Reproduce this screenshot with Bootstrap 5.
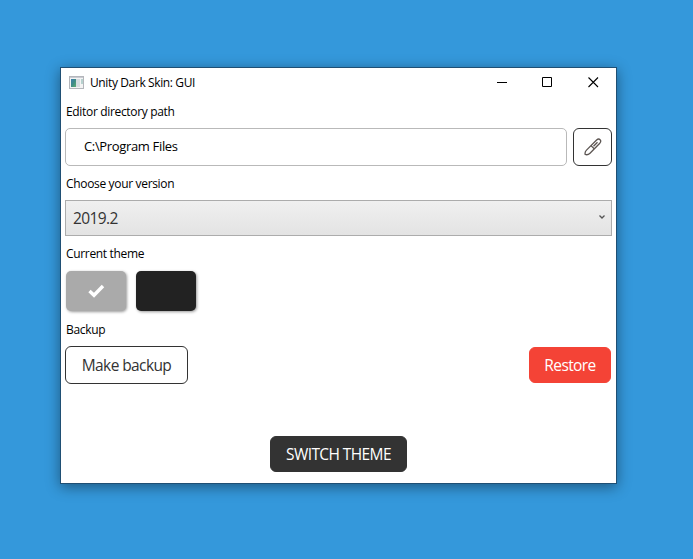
<!DOCTYPE html>
<html lang="en">
<head>
<meta charset="utf-8">
<meta name="viewport" content="width=device-width, initial-scale=1">
<title>Unity Dark Skin: GUI</title>
<link href="https://cdn.jsdelivr.net/npm/bootstrap@5.3.0/dist/css/bootstrap.min.css" rel="stylesheet">
<style>
body{background:#3498db;font-family:"Open Sans","Noto Sans",sans-serif;color:#000;height:559px;overflow:hidden;padding:67px 0 0 60px}
.app-window{width:557px;height:417px;background:#fff;border:1px solid #1f4f74;box-shadow:0 3px 13px rgba(0,0,0,.42)}
.title-bar{height:30px;padding-left:8px}
.title-text{font-size:12px;letter-spacing:-.38px;margin-left:5px;line-height:30px}
.caption-btn{width:45px;height:30px;padding:0;border:0;background:none}
.caption-btn svg{display:block;margin:0 0 2px 16px}
.caption-btn:last-child svg{margin-left:17px}
.content{padding:0 4px}
.field-label{font-size:12px;letter-spacing:-.33px;line-height:16px;padding-left:1px;margin:10px 0 8px}
.first-label{margin-top:6px}
.backup-label{margin-top:11px}
.path-input{height:38px;border:1px solid #b9b9b9;border-radius:5px;padding:0 18px;font-size:13px;letter-spacing:-.34px;color:#000}
.btn{--bs-btn-border-radius:6px;font-size:15.500px;line-height:1;letter-spacing:-.6px;white-space:nowrap;padding:2px 0 0}
.btn-line{--bs-btn-color:#333;--bs-btn-border-color:#333;--bs-btn-bg:#fff}
.edit-btn{width:39px;height:38px;margin-left:6px}
.version-select{height:36px;border:1px solid #acacac;border-radius:0;background:linear-gradient(#f0f0f0,#e3e3e3);color:#333;font-size:15.500px;letter-spacing:-.6px;padding:2px 5px 0 7px}
.version-select svg{margin-top:-4px}
.swatches{gap:10px;padding:1px 0 0 1px}
.swatch{width:60px;height:40px;border-radius:5px;box-shadow:1px 1px 3px rgba(0,0,0,.4)}
.swatch-light{background:#aaa}
.swatch-dark{background:#222}
.make-btn{width:123px;height:38px}
.restore-btn{width:82px;height:36px;--bs-btn-bg:#f44336;--bs-btn-color:#fff;--bs-btn-border-color:#f44336;margin-right:1px}
.switch-row{margin-top:52px}
.switch-btn{width:137px;height:36px;--bs-btn-bg:#333;--bs-btn-color:#fff;--bs-btn-border-color:#333}
</style>
</head>
<body>
<main class="app-window">
  <header class="title-bar d-flex align-items-center">
    <svg width="16" height="14" viewBox="0 0 16 14"><defs><linearGradient id="g" x1="0" y1="0" x2="1" y2="1"><stop offset="0" stop-color="#3c7fb0"/><stop offset=".5" stop-color="#3f8c86"/><stop offset="1" stop-color="#5fae70"/></linearGradient></defs><rect x=".5" y=".5" width="14" height="12" fill="#f4f4f4" stroke="#b4b6bb"/><path d="M1 1.500h13" stroke="#c9cbd2"/><rect x="2" y="3" width="5" height="8" fill="url(#g)"/><rect x="7" y="3" width="4" height="8" fill="#d6dde0"/><rect x="12" y="3" width="2" height="5" fill="#b7d2cf"/></svg>
    <span class="title-text">Unity Dark Skin: GUI</span>
    <div class="d-flex ms-auto">
      <button class="caption-btn" aria-label="Minimize"><svg width="12" height="12"><path d="M0 6.500h10" stroke="#000"/></svg></button>
      <button class="caption-btn" aria-label="Maximize"><svg width="12" height="12"><path d="M.5 1.500h9v9h-9z" fill="none" stroke="#000"/></svg></button>
      <button class="caption-btn" aria-label="Close"><svg width="12" height="12"><path d="M.5 1.500l9.500 9.500M10 1.500l-9.500 9.500" stroke="#000" stroke-width="1.100"/></svg></button>
    </div>
  </header>
  <div class="content">
    <div class="field-label first-label">Editor directory path</div>
    <div class="d-flex">
      <div class="path-input flex-grow-1 d-flex align-items-center">C:\Program Files</div>
      <button class="btn btn-line edit-btn p-0 d-flex align-items-center justify-content-center" aria-label="Edit path">
        <svg width="18" height="18" viewBox="0 0 18 18" fill="none" stroke="#5c5552" stroke-width="1.300"><path d="M1.200 16.500c-.4-1.500.2-3.300 1.300-4.400L12.600 2c1.200-1.100 2.600-1.200 3.500-.3s.8 2.200-.3 3.500L6 15.200c-1.200 1.200-3.200 1.800-4.800 1.300zM7 7.600l3.200 3.100M9.500 8.200l4-3.900"/></svg>
      </button>
    </div>
    <div class="field-label">Choose your version</div>
    <div class="version-select d-flex align-items-center justify-content-between">
      <span>2019.2</span>
      <svg width="8" height="6"><path d="M1.500 1.500l2.500 2.500L6.500 1.500" fill="none" stroke="#555" stroke-width="1.300"/></svg>
    </div>
    <div class="field-label">Current theme</div>
    <div class="swatches d-flex">
      <div class="swatch swatch-light d-flex align-items-center justify-content-center"><svg width="17" height="14" viewBox="0 0 17 14"><path d="M1.500 7l4.500 4.300L15 2" fill="none" stroke="#fff" stroke-width="3.400"/></svg></div>
      <div class="swatch swatch-dark"></div>
    </div>
    <div class="field-label backup-label">Backup</div>
    <div class="d-flex justify-content-between align-items-center">
      <button class="btn btn-line make-btn">Make backup</button>
      <button class="btn restore-btn">Restore</button>
    </div>
    <div class="switch-row d-flex justify-content-center"><button class="btn switch-btn">SWITCH THEME</button></div>
  </div>
</main>
<script src="https://cdn.jsdelivr.net/npm/bootstrap@5.3.0/dist/js/bootstrap.bundle.min.js"></script>
</body>
</html>
